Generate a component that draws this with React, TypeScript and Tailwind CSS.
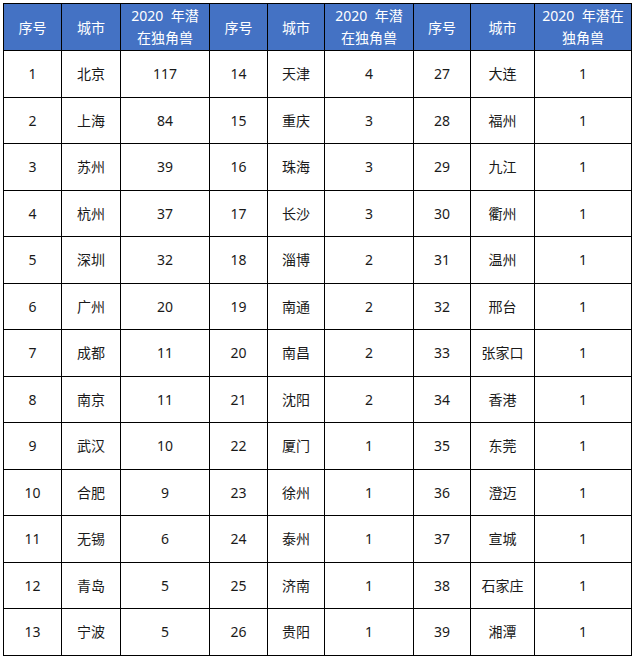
import React from "react";

const rows: [number, string, number, number, string, number, number, string, number][] = [
  [1, "北京", 117, 14, "天津", 4, 27, "大连", 1],
  [2, "上海", 84, 15, "重庆", 3, 28, "福州", 1],
  [3, "苏州", 39, 16, "珠海", 3, 29, "九江", 1],
  [4, "杭州", 37, 17, "长沙", 3, 30, "衢州", 1],
  [5, "深圳", 32, 18, "淄博", 2, 31, "温州", 1],
  [6, "广州", 20, 19, "南通", 2, 32, "邢台", 1],
  [7, "成都", 11, 20, "南昌", 2, 33, "张家口", 1],
  [8, "南京", 11, 21, "沈阳", 2, 34, "香港", 1],
  [9, "武汉", 10, 22, "厦门", 1, 35, "东莞", 1],
  [10, "合肥", 9, 23, "徐州", 1, 36, "澄迈", 1],
  [11, "无锡", 6, 24, "泰州", 1, 37, "宣城", 1],
  [12, "青岛", 5, 25, "济南", 1, 38, "石家庄", 1],
  [13, "宁波", 5, 26, "贵阳", 1, 39, "湘潭", 1],
];

const widths = [58, 59, 89, 58, 57, 89, 57, 64, 97];

export default function App() {
  return (
    <div
      className="w-[637px] h-[658px] bg-white pt-[3px] pl-[3px] text-[14px] text-[#1a1a1a]"
      style={{ fontFamily: '"Noto Sans", "Noto Sans CJK SC", sans-serif' }}
    >
      <table className="border-collapse table-fixed w-[628px]">
        <colgroup>
          {widths.map((w, i) => (
            <col key={i} style={{ width: w }} />
          ))}
        </colgroup>
        <thead>
          <tr className="h-[47px] bg-[#4472c4] text-white">
            <th className="border border-black font-normal">序号</th>
            <th className="border border-black font-normal">城市</th>
            <th className="border border-black font-normal leading-[22px]">
              2020&nbsp; 年潜
              <br />
              在独角兽
            </th>
            <th className="border border-black font-normal">序号</th>
            <th className="border border-black font-normal">城市</th>
            <th className="border border-black font-normal leading-[22px]">
              2020&nbsp; 年潜
              <br />
              在独角兽
            </th>
            <th className="border border-black font-normal">序号</th>
            <th className="border border-black font-normal">城市</th>
            <th className="border border-black font-normal leading-[22px]">
              2020&nbsp; 年潜在
              <br />
              独角兽
            </th>
          </tr>
        </thead>
        <tbody>
          {rows.map((r) => (
            <tr key={r[0]} className="h-[46.5px]">
              {r.map((c, i) => (
                <td key={i} className="border border-black text-center p-0">
                  {c}
                </td>
              ))}
            </tr>
          ))}
        </tbody>
      </table>
    </div>
  );
}
